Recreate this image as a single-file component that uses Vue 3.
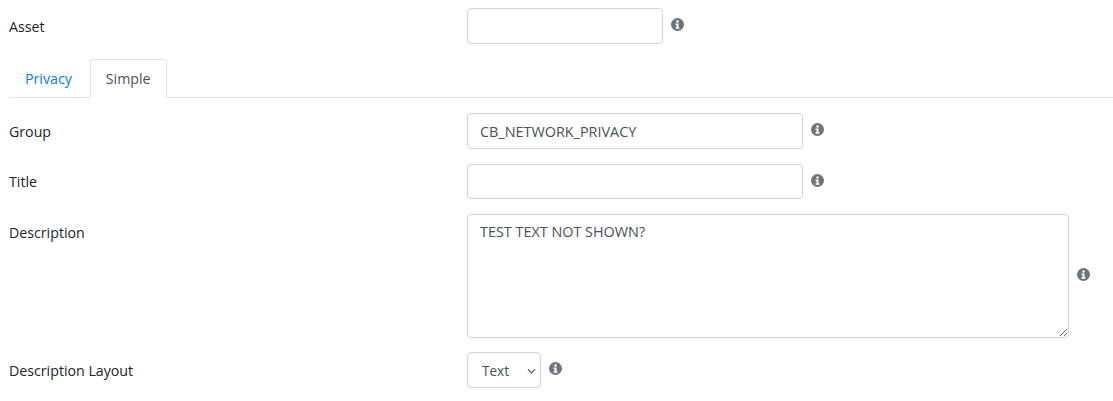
<script setup>
import { ref } from 'vue'

// circle with the "i" cut out, closer to the older font-awesome glyph
const infoPath = 'M256 0a256 256 0 1 0 0 512a256 256 0 1 0 0-512zM256 88a50 50 0 1 1 0 100a50 50 0 1 1 0-100zM176 212h120v156h36v56H180v-56h36v-100h-40z'

const asset = ref('')
const group = ref('CB_NETWORK_PRIVACY')
const title = ref('')
const description = ref('TEST TEXT NOT SHOWN?')
const layout = ref('Text')
const activeTab = ref('Simple')
</script>

<template>
  <div class="page">
    <div class="row row_asset">
      <label class="row_label">Asset</label>
      <input v-model="asset" class="field field_asset" type="text" />
      <svg class="info" viewBox="0 0 512 512"><path :d="infoPath" fill-rule="evenodd" /></svg>
    </div>

    <div class="tabs">
      <a
        v-for="tab in ['Privacy', 'Simple']"
        :key="tab"
        class="tab"
        :class="{ active: tab === activeTab }"
        @click="activeTab = tab"
      >{{ tab }}</a>
    </div>

    <div class="row row_group">
      <label class="row_label">Group</label>
      <input v-model="group" class="field field_wide" type="text" />
      <svg class="info" viewBox="0 0 512 512"><path :d="infoPath" fill-rule="evenodd" /></svg>
    </div>

    <div class="row row_title">
      <label class="row_label">Title</label>
      <input v-model="title" class="field field_wide field_title" type="text" />
      <svg class="info" viewBox="0 0 512 512"><path :d="infoPath" fill-rule="evenodd" /></svg>
    </div>

    <div class="row row_desc">
      <label class="row_label">Description</label>
      <textarea v-model="description" class="field field_area"></textarea>
      <svg class="info" viewBox="0 0 512 512"><path :d="infoPath" fill-rule="evenodd" /></svg>
    </div>

    <div class="row row_layout">
      <label class="row_label">Description Layout</label>
      <div class="select_wrap">
        <select v-model="layout" class="field field_select">
          <option>Text</option>
          <option>Html</option>
        </select>
        <svg class="chevron" viewBox="0 0 10 6"><path d="M1 1l4 4 4-4" /></svg>
      </div>
      <svg class="info" viewBox="0 0 512 512"><path :d="infoPath" fill-rule="evenodd" /></svg>
    </div>
  </div>
</template>

<style>
body {
  background: #fff;
}
</style>

<style scoped>
.page {
  width: 1113px;
  height: 401px;
  padding: 8px 0 0 9px;
  box-sizing: border-box;
  overflow: hidden;
  font-family: "Open Sans", "Noto Sans", sans-serif;
  font-size: 14.4px;
  color: #212529;
}

.row {
  display: flex;
  align-items: center;
}

.row_label {
  width: 458px;
  flex: none;
  font-size: 14.2px;
}

.row_desc {
  margin-top: 15px;
}

.row_desc .row_label {
  align-self: flex-start;
  padding-top: 9px;
}

.row_title {
  margin-top: 15px;
}

.row_layout {
  margin-top: 14px;
}

.field {
  box-sizing: border-box;
  height: 36px;
  padding: 6px 12px;
  border: 1px solid #ced4da;
  border-radius: 4px;
  background: #fff;
  color: #495057;
  font: inherit;
  outline: none;
}

.field_asset {
  width: 196px;
}

.field_wide {
  width: 336px;
}

.field_title {
  height: 35px;
}

.field_area {
  display: block;
  width: 602px;
  height: 124px;
  padding-top: 7px;
  resize: vertical;
}

.select_wrap {
  position: relative;
  display: flex;
}

.field_select {
  width: 74px;
  appearance: none;
  padding-left: 14px;
  padding-right: 20px;
  font-size: 13.6px;
}

.chevron {
  position: absolute;
  right: 5px;
  top: 16px;
  width: 9px;
  height: 6px;
  fill: none;
  stroke: #555;
  stroke-width: 1.3;
  pointer-events: none;
}

.info {
  flex: none;
  width: 13px;
  height: 13px;
  margin: -3px 0 0 8px;
  fill: #6c757d;
}

.tabs {
  display: flex;
  align-items: flex-end;
  gap: 2px;
  height: 39px;
  margin-top: 14px;
  margin-bottom: 15px;
  border-bottom: 1px solid #dee2e6;
}

.tab {
  box-sizing: border-box;
  height: 39px;
  margin-bottom: -1px;
  padding: 0 15px;
  display: flex;
  align-items: center;
  border: 1px solid transparent;
  border-radius: 4px 4px 0 0;
  color: #007bff;
  font-size: 14.2px;
  cursor: pointer;
}

.tab.active {
  border-color: #dee2e6 #dee2e6 #fff;
  background: #fff;
  color: #495057;
}
</style>
